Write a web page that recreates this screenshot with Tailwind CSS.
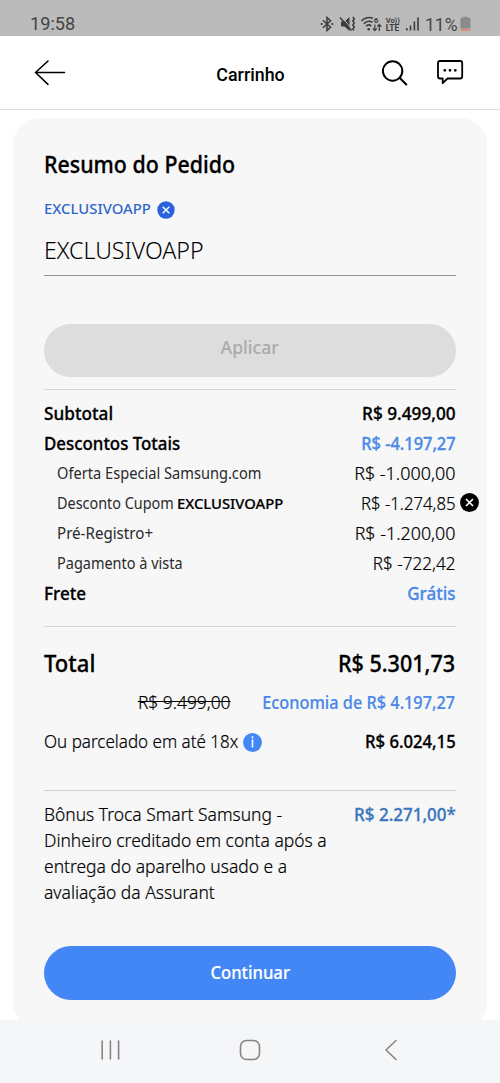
<!DOCTYPE html>
<html lang="pt-BR">
<head>
<meta charset="utf-8">
<title>Carrinho</title>
<script src="https://cdn.jsdelivr.net/npm/@tailwindcss/browser@4"></script>
</head>
<body class="bg-white">
<div class="flex h-[1083px] w-[500px] flex-col overflow-hidden whitespace-nowrap bg-white font-['Noto_Sans',sans-serif] text-black">

  <!-- Status bar -->
  <div class="flex h-9 shrink-0 items-start justify-between bg-[#bbbbbb] pr-7 pl-[30px] pt-3 text-[#444444]">
    <span class="font-['Roboto',sans-serif] text-[18.5px] leading-6"><span class="inline-block origin-left scale-x-[.98]">19:58</span></span>
    <svg class="h-6 w-[154px]" viewBox="0 0 154 24" fill="none" stroke="#3c3c3c" stroke-width="1.500">
      <path d="M5 8.300l7.500 7-3.500 3.200V5.500l3.500 3.200-7.500 7"/>
      <path d="M3.700 12h.01M14.300 12h.01" stroke-width="2.200" stroke-linecap="round"/>
      <path d="M23 9.500h3.500l5-4.500v14l-5-4.500H23z" fill="#3c3c3c" stroke="none"/>
      <path d="M23.500 4.500l10 12" stroke="#bbbbbb" stroke-width="1"/>
      <path d="M22 5.500l11.500 13"/>
      <path d="M34.800 5l1.500 2-1.500 2 1.500 2-1.500 2 1.500 2-1.500 2 1 1.500" stroke-width="1.500"/>
      <path d="M43.500 9c3-3.600 8-4.400 11.500-2.700M45.800 11.700c2.300-2.500 6-3 8.700-1.500M48 14.300c1.500-1.500 3.800-1.600 5.300-.2" stroke-width="1.600"/>
      <circle cx="50.700" cy="17.200" r="1.300" fill="#3c3c3c" stroke="none"/>
      <text x="55.800" y="10.500" font-family="Roboto" font-size="8" font-weight="700" fill="#3c3c3c" stroke="none">6</text>
      <path d="M56.800 12.500v6m-2-2.200l2 2.200 2-2.200M61.300 19v-6.500m-2 2.200l2-2.200 2 2.200" stroke-width="1.200"/>
      <text x="67.800" y="10.500" font-family="Roboto" font-size="7.500" font-weight="700" fill="#3c3c3c" stroke="none" textLength="14">Vo))</text>
      <text x="67.800" y="19" font-family="Roboto" font-size="8.500" font-weight="700" fill="#3c3c3c" stroke="none" textLength="13.500">LTE</text>
      <path d="M88.800 18.500v-2.500M92.500 18.500v-5M96.400 18.500v-9M100 18.500v-13" stroke-width="1.600"/>
      <text x="107" y="18.500" font-family="Roboto" font-size="18.500" fill="#444444" stroke="none" textLength="32.500" lengthAdjust="spacingAndGlyphs">11%</text>
      <path d="M144 5.500h1.500V4.800h4v.7h1.500q1.500 0 1.500 1.500V16.500h-10V7q0-1.500 1.500-1.500z" fill="#8b8b8b" stroke="none"/>
      <path d="M142.500 16.500h10v1q0 1.500-1.500 1.500h-7q-1.500 0-1.500-1.500z" fill="#d98c76" stroke="none"/>
    </svg>
  </div>

  <!-- App bar -->
  <header class="flex h-[74px] shrink-0 items-center justify-between border-b border-[#dddddd] pr-[36px] pl-[34px]">
    <svg class="h-7 w-[82px]" viewBox="0 0 82 28" fill="none" stroke="#000" stroke-width="1.600" stroke-linecap="round" stroke-linejoin="round"><path d="M30.500 13.500H1.500M14 2L1.500 13.500 14 25.300"/></svg>
    <h1 class="ml-[3px] pt-[3px] font-['Roboto',sans-serif] text-[18px] font-medium"><span class="inline-block scale-x-[.99]">Carrinho</span></h1>
    <svg class="h-7 w-[82px]" viewBox="0 0 82 28" fill="none" stroke="#000" stroke-width="2" stroke-linecap="round" stroke-linejoin="round">
      <circle cx="10.600" cy="12" r="9.700"/><path d="M17.800 19l6.500 6.500"/>
      <path d="M58 2h20.200q2 0 2 2v13.500q0 2-2 2H65.500l-4.800 4.700v-4.700H58q-2 0-2-2V4q0-2 2-2z" stroke-width="1.800"/>
      <path d="M62.800 11.300h.01M68 11.300h.01M73.300 11.300h.01" stroke-width="2.800"/>
    </svg>
  </header>

  <main class="flex-1 overflow-hidden px-[13px] pt-2">
    <section class="h-[911px] rounded-[26px] bg-[#f7f7f7] pl-[31.4px] pr-[31.5px] pt-[30px]">
      <h2 class="h-8 leading-8"><span class="inline-block origin-left scale-x-[.93] text-[23px] font-medium [-webkit-text-stroke:0.3px]">Resumo do Pedido</span></h2>

      <!-- Applied coupon -->
      <div class="mt-4 flex h-6 items-center text-[#3067cc]">
        <span class="w-[113px] text-[15px] font-medium leading-6"><span class="inline-block origin-left scale-x-[.99]">EXCLUSIVOAPP</span></span>
        <svg class="mt-1 size-[18px]" viewBox="0 0 18 18"><circle cx="9" cy="9" r="8.700" fill="#2a62dc"/><path d="M5.700 5.700l6.600 6.600m0-6.600l-6.600 6.600" stroke="#fff" stroke-width="1.400"/></svg>
      </div>
      <div class="mt-[10px] flex h-[46px] items-start border-b border-[#949494]">
        <span class="inline-block origin-left scale-x-[.985] text-[23.5px] font-light leading-[40px]">EXCLUSIVOAPP</span>
      </div>
      <div class="mt-12 flex h-[52.5px] items-start justify-center rounded-full bg-[#dddddd] text-[18px] font-medium leading-[47px] text-[#aaaaaa]"><span class="scale-x-[.98]">Aplicar</span></div>

      <!-- Price breakdown -->
      <dl class="mt-[12.5px] border-t border-[#d5d5d5] pt-[7.5px] text-[18.5px] leading-[30px]">
        <div class="flex h-[30px] justify-between font-medium [-webkit-text-stroke:0.3px]"><dt class="origin-left scale-x-[.93]">Subtotal</dt><dd class="origin-right scale-x-[.93]">R$ 9.499,00</dd></div>
        <div class="flex h-[30px] justify-between font-medium [-webkit-text-stroke:0.3px]"><dt class="origin-left scale-x-[.912]">Descontos Totais</dt><dd class="origin-right scale-x-[.885] text-[#4a89e8]">R$ -4.197,27</dd></div>
        <div class="flex h-[30px] justify-between pl-[13px]"><dt class="origin-left scale-x-[.914] text-base leading-[30px] text-[#2a2a2a]">Oferta Especial Samsung.com</dt><dd class="origin-right scale-x-[.97] font-light [-webkit-text-stroke:0.2px]">R$ -1.000,00</dd></div>
        <div class="-mr-[23px] flex h-[30px] items-center pl-[13px]">
          <dt class="flex flex-1 text-base leading-[30px] text-[#2a2a2a]"><span class="w-[120px]"><span class="inline-block origin-left scale-x-[.9]">Desconto Cupom</span></span><b class="origin-left scale-x-[.985] text-[15px] font-medium text-black [-webkit-text-stroke:0.2px]">EXCLUSIVOAPP</b></dt>
          <dd class="origin-right scale-x-[.905] font-light [-webkit-text-stroke:0.2px]">R$ -1.274,85</dd>
          <svg class="ml-1 size-[19px]" viewBox="0 0 19 19"><circle cx="9.500" cy="9.500" r="9.400"/><path d="M6 6l7 7m0-7l-7 7" stroke="#fff" stroke-width="1.700"/></svg>
        </div>
        <div class="flex h-[30px] justify-between pl-[13px]"><dt class="origin-left scale-x-[.945] text-base leading-[30px] text-[#2a2a2a]">Pré-Registro+</dt><dd class="origin-right scale-x-[.965] font-light [-webkit-text-stroke:0.2px]">R$ -1.200,00</dd></div>
        <div class="flex h-[30px] justify-between pl-[13px]"><dt class="origin-left scale-x-[.905] text-base leading-[30px] text-[#2a2a2a]">Pagamento à vista</dt><dd class="origin-right scale-x-[.925] font-light [-webkit-text-stroke:0.2px]">R$ -722,42</dd></div>
        <div class="flex h-[30px] justify-between font-medium [-webkit-text-stroke:0.3px]"><dt class="origin-left scale-x-[.925]">Frete</dt><dd class="origin-right scale-x-[.92] text-[#4a89e8]">Grátis</dd></div>
      </dl>

      <!-- Totals -->
      <div class="mt-[18.5px] border-t border-[#d5d5d5] pt-[19.5px] text-[18.5px]">
        <div class="flex h-8 justify-between text-[23px] font-medium leading-8 [-webkit-text-stroke:0.3px]"><span class="origin-left scale-x-[.96]">Total</span><span class="origin-right scale-x-[.937]">R$ 5.301,73</span></div>
        <div class="mt-2 flex h-[30px] justify-end leading-[30px]"><span class="origin-right scale-x-[.94] font-light line-through [-webkit-text-stroke:0.2px]">R$ 9.499,00</span><span class="w-[224.5px] text-right"><span class="-ml-8 inline-block origin-right scale-x-[.88] font-medium text-[#4a89e8] [-webkit-text-stroke:0.2px]">Economia de R$ 4.197,27</span></span></div>
        <div class="mt-[9px] flex h-[30px] justify-between leading-[30px]">
          <div class="flex items-center"><span class="w-[199px]"><span class="inline-block origin-left scale-x-[.92] font-light [-webkit-text-stroke:0.2px]">Ou parcelado em até 18x</span></span>
            <svg class="mt-1 size-[19px]" viewBox="0 0 19 19"><circle cx="9.500" cy="9.500" r="9.400" fill="#4386f5"/><path d="M9.500 6.500v8M9.500 3.300v2" stroke="#fff" stroke-width="1.600"/></svg></div>
          <span class="origin-right scale-x-[.9] font-medium [-webkit-text-stroke:0.3px]">R$ 6.024,15</span>
        </div>
      </div>

      <!-- Trade-in bonus -->
      <div class="mt-[34.5px] flex h-[130px] justify-between border-t border-[#cfcfcf] pt-[9.5px] text-[18.5px] leading-[26px]">
        <p class="w-[300px] origin-left scale-x-[.943] font-light [-webkit-text-stroke:0.2px]">Bônus Troca Smart Samsung -<br>Dinheiro creditado em conta após a<br>entrega do aparelho usado e a<br>avaliação da Assurant</p>
        <span class="h-[26px] origin-right scale-x-[.918] font-medium text-[#3a76bd] [-webkit-text-stroke:0.3px]">R$ 2.271,00*</span>
      </div>

      <button class="mt-[26px] flex h-[53.5px] w-full justify-center rounded-full bg-[#4386f5] text-[18.5px] font-medium leading-[52px] text-white [-webkit-text-stroke:0.2px]"><span class="scale-x-[.9]">Continuar</span></button>
    </section>
  </main>

  <!-- Android navigation -->
  <nav class="flex h-[63px] shrink-0 items-start justify-between bg-[#f5f6f8] pr-[102px] pl-[99px] pt-[18px]">
    <svg class="h-6 w-[22px]" viewBox="0 0 22 24" stroke="#858585" stroke-width="1.600" stroke-linecap="round"><path d="M3.200 3v18M11.400 3v18M19.600 3v18"/></svg>
    <svg class="-ml-[5px] h-6 w-[22px]" viewBox="0 0 22 24" fill="none" stroke="#858585" stroke-width="1.600"><rect x="1.500" y="2.500" width="19" height="19" rx="6"/></svg>
    <svg class="h-6 w-[14px]" viewBox="0 0 14 24" fill="none" stroke="#858585" stroke-width="1.600" stroke-linecap="round" stroke-linejoin="round"><path d="M12 2.500L2 12l10 9.500"/></svg>
  </nav>
</div>
</body>
</html>
